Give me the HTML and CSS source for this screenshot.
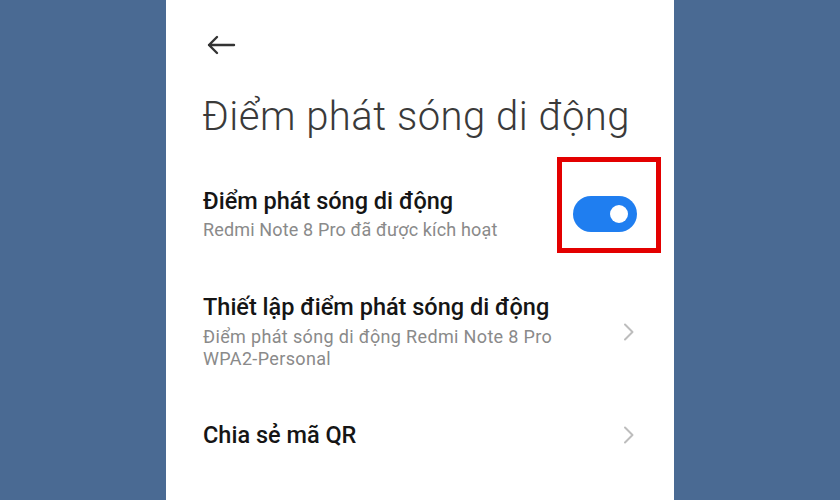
FILE: index.html
```html
<!DOCTYPE html>
<html lang="vi">
<head>
<meta charset="utf-8">
<link rel="stylesheet" href="styles.css">
</head>
<body>
<div class="panel">
  <div class="back">
    <svg width="30" height="20" viewBox="0 0 30 20"><path d="M28 10H3M11 2L3 10l8 8" fill="none" stroke="#333" stroke-width="2.4" stroke-linecap="round" stroke-linejoin="round"/></svg>
  </div>
  <h1 class="title">Điểm phát sóng di động</h1>
  <div class="row row1">
    <div class="text">
      <div class="rtitle">Điểm phát sóng di động</div>
      <div class="sub">Redmi Note 8 Pro đã được kích hoạt</div>
    </div>
    <div class="toggle-wrap">
      <div class="toggle"><span class="knob"></span></div>
      <div class="highlight"></div>
    </div>
  </div>
  <div class="row row2">
    <div class="text">
      <div class="rtitle">Thiết lập điểm phát sóng di động</div>
      <div class="sub sub2">Điểm phát sóng di động Redmi Note 8 Pro<br>WPA2-Personal</div>
    </div>
    <svg class="chev" width="12" height="18" viewBox="0 0 12 18"><path d="M2 1.5L9.5 9 2 16.5" fill="none" stroke="#bdbdbd" stroke-width="2" stroke-linecap="round" stroke-linejoin="round"/></svg>
  </div>
  <div class="row row3">
    <div class="text">
      <div class="rtitle">Chia sẻ mã QR</div>
    </div>
    <svg class="chev" width="12" height="18" viewBox="0 0 12 18"><path d="M2 1.5L9.5 9 2 16.5" fill="none" stroke="#bdbdbd" stroke-width="2" stroke-linecap="round" stroke-linejoin="round"/></svg>
  </div>
</div>
</body>
</html>
```
FILE: styles.css
```css
html, body {
  margin: 0;
  padding: 0;
  height: 100%;
}
body {
  background: #4a6a93;
  display: flex;
  justify-content: center;
  font-family: Roboto, "Noto Sans", sans-serif;
  overflow: hidden;
}
.panel {
  width: 508px;
  height: 500px;
  background: #fff;
  box-sizing: border-box;
  padding: 0 37px 0 37px;
}
.back {
  height: 20px;
  margin-top: 35px;
  padding-left: 3px;
}
.back svg { display: block; }
.title {
  margin: 39px 0 0 -1px;
  font-size: 40px;
  line-height: 46px;
  font-weight: 300;
  color: #3a3a3a;
  letter-spacing: 0.5px;
}
.row {
  display: flex;
  align-items: center;
  justify-content: space-between;
}
.row1 { margin-top: 47px; }
.row2 { margin-top: 52px; }
.row3 { margin-top: 51px; }
.rtitle {
  font-size: 23.5px;
  line-height: 28px;
  font-weight: 500;
  color: #151515;
}
.sub {
  font-size: 18px;
  line-height: 22px;
  color: #8a8a8a;
  letter-spacing: 0.15px;
  margin-top: 4px;
}
.sub2 { margin-top: 5px; letter-spacing: 0.35px; }
.chev { margin-right: 2px; display: block; }
.toggle-wrap {
  position: relative;
}
.toggle {
  width: 64px;
  height: 36px;
  border-radius: 18px;
  background: #1f7ef0;
  position: relative;
}
.knob {
  position: absolute;
  right: 9px;
  top: 9px;
  width: 18px;
  height: 18px;
  border-radius: 50%;
  background: #fff;
}
.highlight {
  position: absolute;
  left: -16px;
  top: -39px;
  width: 94px;
  height: 86px;
  border: 5px solid #e30000;
}
```
